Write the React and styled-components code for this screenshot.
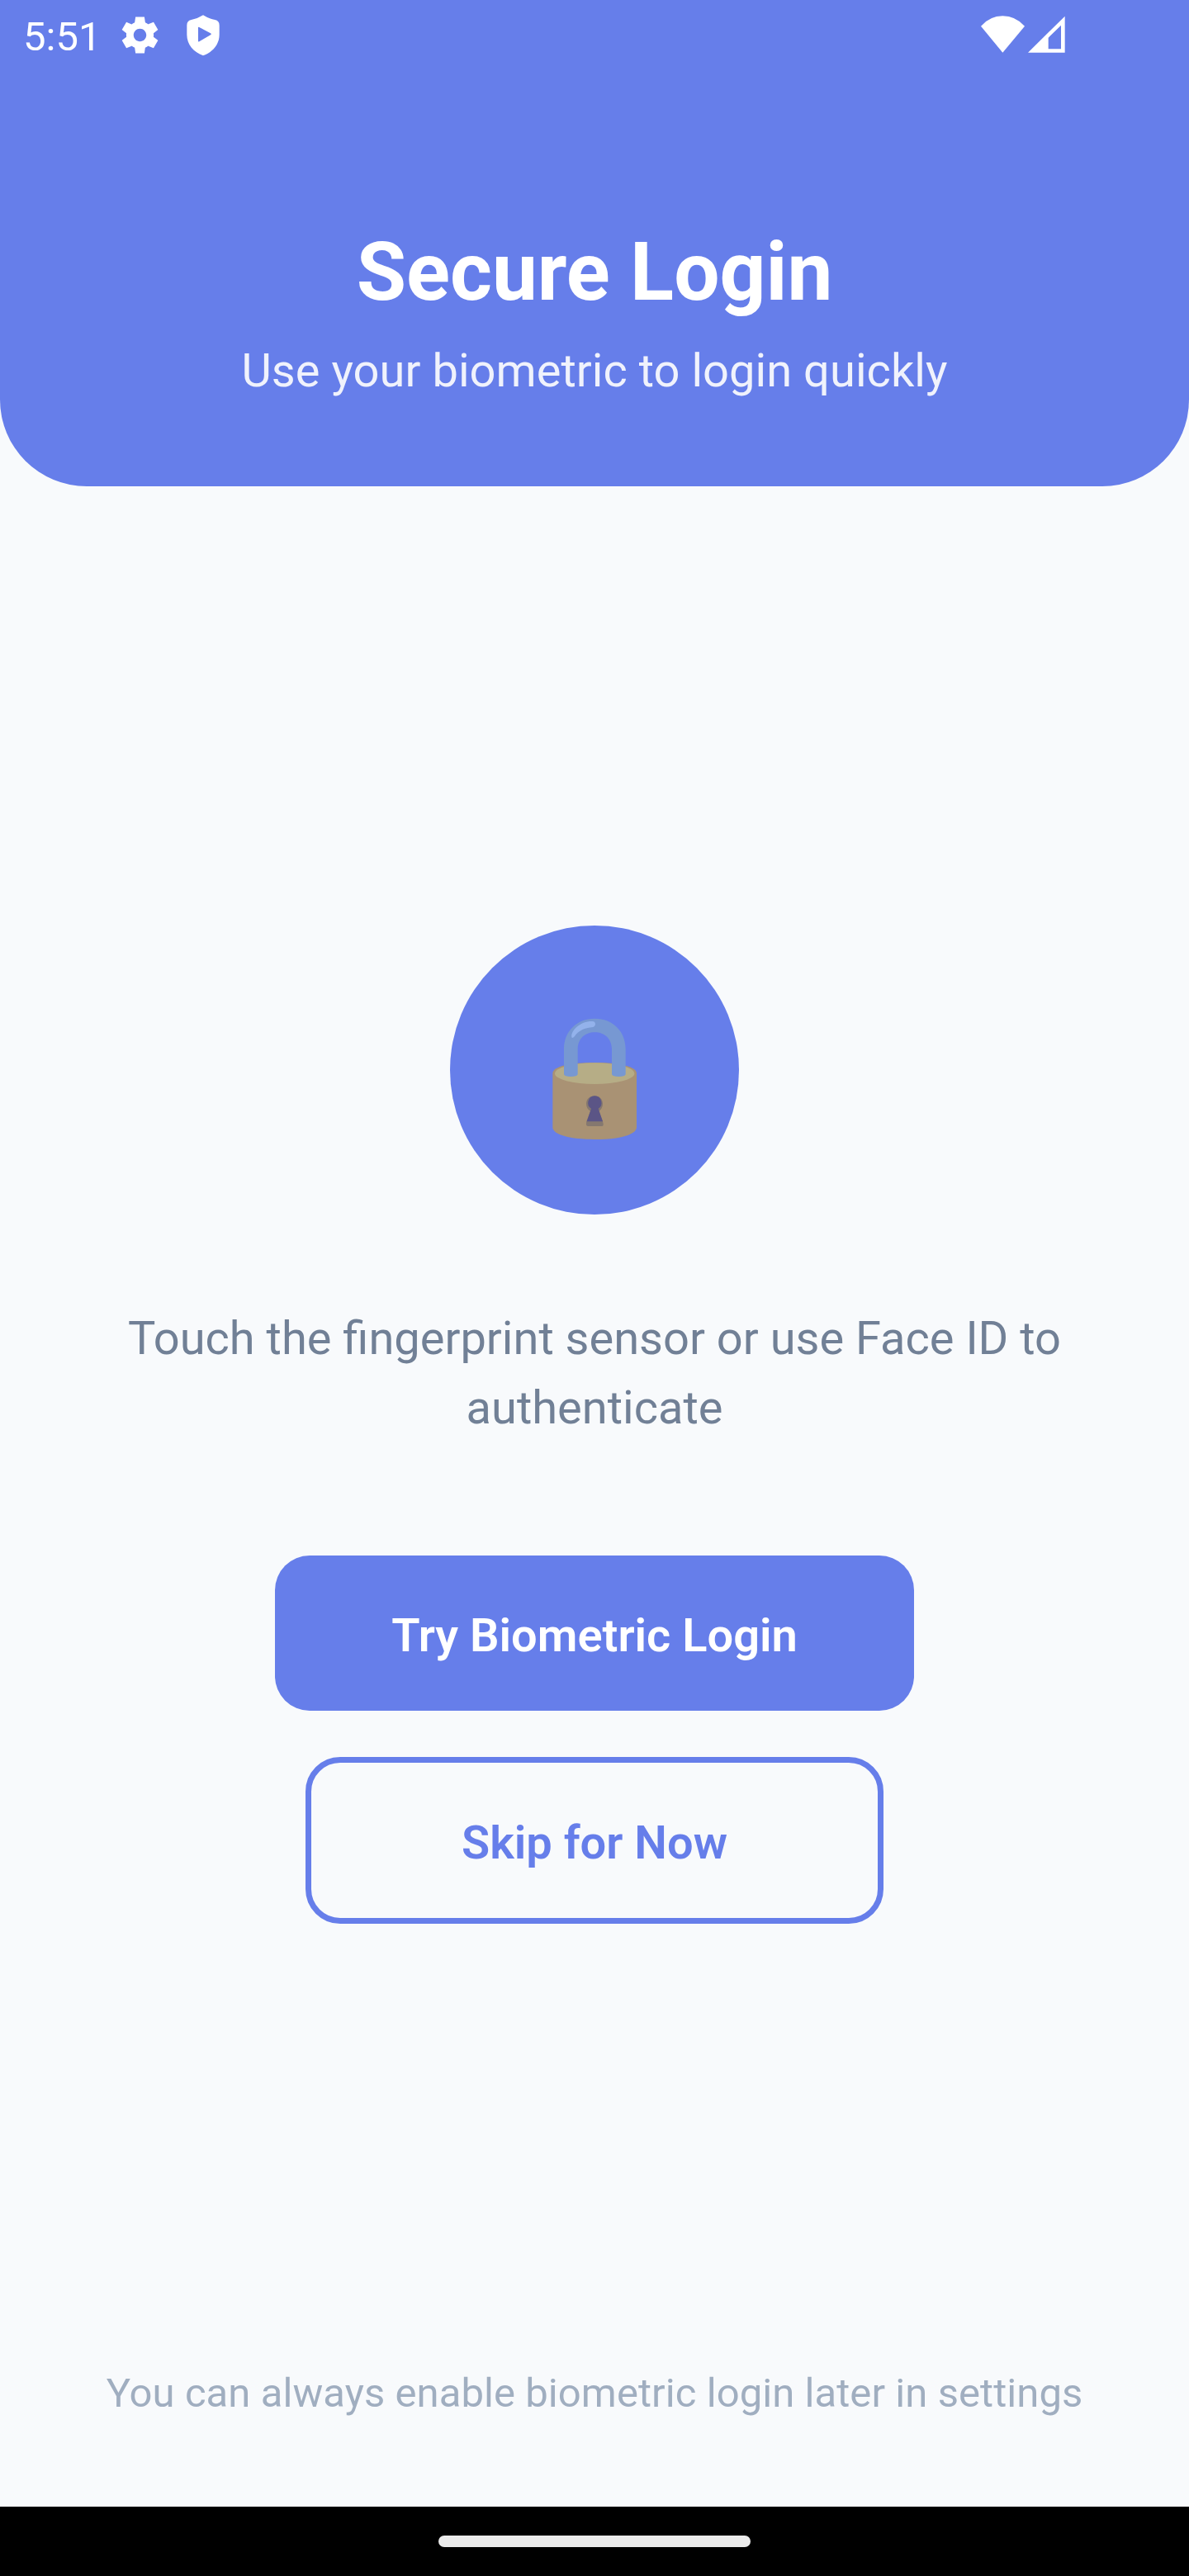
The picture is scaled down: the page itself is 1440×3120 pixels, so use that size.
import React from "react";
import styled, { createGlobalStyle } from "styled-components";

const GlobalStyle = createGlobalStyle`
  body { margin: 0; background: #f8fafc; }
  * { box-sizing: border-box; }
`;

const Screen = styled.div`
  width: 1440px;
  height: 3120px;
  display: flex;
  flex-direction: column;
  background: #f8fafc;
  font-family: Roboto, sans-serif;
`;

const Header = styled.header`
  height: 589px;
  background: #667eea;
  border-radius: 0 0 105px 105px;
  color: #fff;
  text-align: center;
`;

const StatusBar = styled.div`
  height: 84px;
  display: flex;
  align-items: center;
  padding: 0 150px 0 28px;
`;

const Clock = styled.span`
  font-size: 49px;
  line-height: 58px;
  width: 118px;
  text-align: left;
  margin-top: 6px;
`;

const StatusIcon = styled.svg`
  display: block;
  flex: none;
  fill: #fff;
  width: ${(p) => p.$w}px;
  height: ${(p) => p.$h}px;
  margin-left: ${(p) => p.$gap || 0}px;
  margin-top: ${(p) => p.$nudge || 0}px;
`;

const Spacer = styled.div`
  flex: 1;
`;

const Title = styled.h1`
  margin: 186px 0 0;
  font-size: 98px;
  line-height: 120px;
  font-weight: 700;
`;

const Subtitle = styled.p`
  margin: 21px 0 0;
  font-size: 56px;
  line-height: 76px;
  letter-spacing: 0.04px;
  opacity: 0.9;
`;

const Main = styled.main`
  flex: 1;
  display: flex;
  flex-direction: column;
  align-items: center;
  padding-top: 532px;
`;

const Badge = styled.div`
  width: 350px;
  height: 350px;
  border-radius: 50%;
  background: #667eea;
  display: flex;
  justify-content: center;
  align-items: center;
  padding-top: 18px;
`;

const Hint = styled.p`
  margin: 108px 0 0;
  width: 1220px;
  color: #718096;
  font-size: 56px;
  line-height: 84px;
  text-align: center;
`;

const Button = styled.button`
  width: ${(p) => (p.$outline ? 700 : 774)}px;
  height: ${(p) => (p.$outline ? 202 : 188)}px;
  margin-top: ${(p) => p.$top}px;
  padding: 5px 0 0;
  border: ${(p) => (p.$outline ? "7px solid #667eea" : "0")};
  border-radius: 42px;
  background: ${(p) => (p.$outline ? "transparent" : "#667eea")};
  color: ${(p) => (p.$outline ? "#667eea" : "#fff")};
  font: 600 56px/66px Roboto, sans-serif;
`;

const Note = styled.footer`
  height: 186px;
  color: #a0aec0;
  font-size: 49px;
  line-height: 97px;
  letter-spacing: 0.07px;
  text-align: center;
`;

const NavBar = styled.nav`
  height: 84px;
  background: #000;
  display: flex;
  align-items: center;
  justify-content: center;
`;

const NavHandle = styled.div`
  width: 378px;
  height: 14px;
  border-radius: 7px;
  background: #ebebeb;
`;

function Padlock() {
  return (
    <svg width="160" height="190" viewBox="0 0 480 570">
      <path d="M88 270C88 244 156 231 240 231s153 13 153 39V466c0 28-66 44-153 44S88 494 88 466Z" fill="#a99274" />
      <ellipse cx="240.500" cy="270.500" rx="144.500" ry="38.500" fill="#b6ad86" />
      <path d="M129 182C129 119 174 71 241 71s112 48 112 111V274q-3 8-25 8t-25-8V182C303 145 277 121 241 121s-62 24-62 61V274q-3 8-25 8t-25-8Z" fill="#7798d2" />
      <path d="M157 139C153 113 191 79 233 81Q243 82 243 92 242 101 229 103C201 106 183 115 168 135Q160 144 157 139Z" fill="#93b2eb" />
      <path d="M240 352c17 0 30 12 30 29 0 12-6 21-14 26l14 38q5 17-2 17h-52q-9 0-5-17l14-38c-9-5-15-14-15-26 0-17 13-29 30-29Z" fill="#85786f" />
      <path d="M241 352a25 25 0 0 1 13 46L270 445H212L228 398A25 25 0 0 1 241 352Z" fill="#5b5586" />
    </svg>
  );
}

export default function App() {
  return (
    <Screen>
      <GlobalStyle />
      <Header>
        <StatusBar>
          <Clock>5:51</Clock>
          <StatusIcon $w={53} $h={53} $gap={-3} viewBox="0 0 24 24">
            <path d="M19.440 12.990l-.01.020c.04-.33.08-.67.08-1.010 0-.34-.03-.66-.07-.99l.01.020 2.440-1.920-2.430-4.220-2.870 1.160.01.010c-.52-.4-1.090-.74-1.710-1h.01L14.440 2H9.570l-.44 3.070h.01c-.62.26-1.190.6-1.710 1l.01-.01-2.880-1.170-2.440 4.220 2.440 1.920.01-.02c-.04.33-.07.65-.07.99 0 .34.03.68.08 1.010l-.01-.02-2.100 1.650-.33.26 2.430 4.200 2.880-1.150-.02-.04c.53.41 1.100.75 1.730 1.010h-.03L9.580 22h4.850s.03-.18.06-.42l.38-2.650h-.01c.62-.26 1.200-.6 1.730-1.010l-.02.04 2.880 1.150 2.430-4.200s-.14-.12-.33-.26l-2.110-1.660zM12 15.500c-1.930 0-3.500-1.570-3.500-3.500s1.570-3.500 3.500-3.500 3.500 1.570 3.500 3.500-1.570 3.500-3.500 3.500z" />
          </StatusIcon>
          <StatusIcon $w={40} $h={50} $gap={30} $nudge={1} viewBox="0 0 120 150">
            <path fillRule="evenodd" d="M60 1Q78 13 103 18Q119 21 119 38V72C119 108 94 136 60 148C26 136 1 108 1 72V38Q1 21 17 18Q42 13 60 1ZM42 49Q41 43 46 45L87 67Q92 70 87 73L46 97Q41 99 42 93Z" />
          </StatusIcon>
          <Spacer />
          <StatusIcon $w={53} $h={45} $nudge={-2} viewBox="0 0 159 135">
            <path d="M0 38Q33 1 79 1T159 38L79 134Z" />
          </StatusIcon>
          <StatusIcon $w={45} $h={45} $gap={4} $nudge={-2} viewBox="0 0 135 135">
            <path fillRule="evenodd" d="M0 134L134 2V134ZM74 80V121H120V35Z" />
          </StatusIcon>
        </StatusBar>
        <Title>Secure Login</Title>
        <Subtitle>Use your biometric to login quickly</Subtitle>
      </Header>
      <Main>
        <Badge>
          <Padlock />
        </Badge>
        <Hint>Touch the fingerprint sensor or use Face ID to authenticate</Hint>
        <Button $top={137}>Try Biometric Login</Button>
        <Button $outline $top={56}>Skip for Now</Button>
      </Main>
      <Note>You can always enable biometric login later in settings</Note>
      <NavBar>
        <NavHandle />
      </NavBar>
    </Screen>
  );
}
